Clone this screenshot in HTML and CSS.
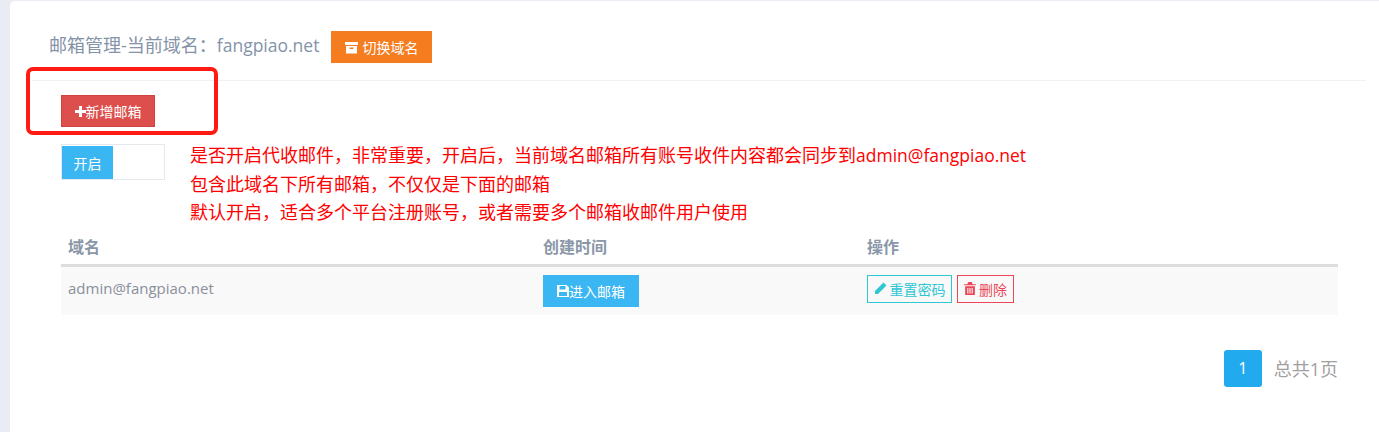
FILE: index.html
```html
<!doctype html>
<html>
<head>
<meta charset="utf-8">
<title>邮箱管理</title>
<link rel="stylesheet" href="styles.css">
</head>

<body>
<div class="card">
    <div class="head">
        <span class="head-title">邮箱管理-当前域名：<span class="latin">fangpiao.net</span></span>
        <a class="btn btn-orange">
            <svg width="13" height="13" viewBox="0 0 13 13"><path fill="#fff" d="M0 1h13v3H0zM1 5h11v7.500H1z"/><path fill="#f57d20" d="M4.500 6.500h4V8h-4z"/></svg>切换域名
        </a>
    </div>
    <div class="body">
        <a class="btn btn-red">
            <svg width="11" height="11" viewBox="0 0 11 11"><path fill="#fff" d="M4 0h3v4h4v3H7v4H4V7H0V4h4z"/></svg>新增邮箱
        </a>
        <div class="tip-row">
            <div class="switch"><span class="switch-on">开启</span></div>
            <div class="tip">
                <p>是否开启代收邮件，非常重要，开启后，当前域名邮箱所有账号收件内容都会同步到<span class="latin">admin@fangpiao.net</span></p>
                <p>包含此域名下所有邮箱，不仅仅是下面的邮箱</p>
                <p>默认开启，适合多个平台注册账号，或者需要多个邮箱收邮件用户使用</p>
            </div>
        </div>
        <table class="list">
            <thead>
                <tr><th class="col-a">域名</th><th class="col-b">创建时间</th><th>操作</th></tr>
            </thead>
            <tbody>
                <tr>
                    <td class="mail">admin@fangpiao.net</td>
                    <td>
                        <div class="cell-btns">
                            <a class="btn btn-blue">
                                <svg width="12" height="12" viewBox="0 0 12 12"><path fill="#fff" fill-rule="evenodd" d="M0 0h9.500L12 2.500V12H0zM2.500 1v3.500h6V1zM2 7v4h8V7z"/></svg>进入邮箱
                            </a>
                        </div>
                    </td>
                    <td>
                        <div class="cell-btns">
                            <a class="btn-line btn-cyan">
                                <svg width="13" height="13" viewBox="0 0 13 13"><path fill="#2ec7d4" d="M9.500 0.500l3 3L4 12H1v-3z"/></svg>重置密码
                            </a>
                            <a class="btn-line btn-pink">
                                <svg width="12" height="13" viewBox="0 0 11 12"><path fill="#ec4758" fill-rule="evenodd" d="M4 0h3l1 2h3v1H0V2h3zM1 4h9v8H1zM3 5.500v5h1v-5zM5 5.500v5h1v-5zM7 5.500v5h1v-5z"/></svg>删除
                            </a>
                        </div>
                    </td>
                </tr>
            </tbody>
        </table>
        <div class="pager">
            <span class="page-num">1</span>
            <span class="page-total">总共1页</span>
        </div>
    </div>
</div>
<div class="mark"></div>
</body>
</html>
```

FILE: styles.css
```css
html,body,div,p,table,th,td{margin:0;padding:0;}
html,body{height:100%;overflow:hidden;}
body{background:#e9ecf3;font-family:"Open Sans","Noto Sans CJK SC",sans-serif;color:#8a97a8;padding:1px 0 0 10px;box-sizing:border-box;}
a{text-decoration:none;display:inline-flex;align-items:center;justify-content:center;}
.latin{font-size:17.500px;}
.card{background:#fff;border-radius:5px 0 0 0;height:431px;padding:0 13px 0 22px;}
.head{display:flex;align-items:flex-start;height:80px;padding:30px 0 0 18px;box-sizing:border-box;border-bottom:1px solid #eff1f5;}
.head-title{font-size:18px;line-height:28px;color:#8493a8;margin-left:-1px;}
.btn{color:#fff;font-size:14px;height:32px;box-sizing:border-box;}
.btn-orange{background:#f57d20;width:101px;margin-left:12px;height:32px;}
.btn-orange svg{margin-right:4px;}
.btn-red{background:#dc4f4d;border:1px solid #cf4341;width:94px;}
.btn-blue{background:#3ab6f3;width:96px;}
.body{padding:14px 28px 0 29px;}
.tip-row{display:flex;margin-top:17px;}
.switch{width:104px;height:36px;box-sizing:border-box;border:1px solid #e5e8ec;padding:1px 0 0 0;}
.switch-on{display:flex;align-items:center;justify-content:center;width:51px;height:33px;background:#3ab6f3;color:#fff;font-size:14px;}
.tip{margin-left:25px;color:#f00;font-size:18px;line-height:28.500px;margin-top:-3px;}
.list{border-collapse:collapse;table-layout:fixed;width:1277px;margin-top:1.500px;}
.list th{text-align:left;font-size:16px;font-weight:bold;height:37px;padding:0 7px;box-sizing:border-box;border-bottom:3px solid #ddd;color:#8a97a8;}
.list th.col-a{width:475px;}
.list th.col-b{width:324px;}
.list td{background:#f9f9f9;height:48px;padding:0 7px;vertical-align:top;font-size:14px;}
.list td.mail{color:#8a8f9c;font-size:15px;line-height:43px;}
.cell-btns{display:flex;gap:5px;padding-top:8px;}
.btn-line{height:28px;box-sizing:border-box;font-size:14px;border:1px solid;}
.btn-line svg{margin-right:3px;}
.btn-cyan{color:#2ec7d4;border-color:#2ec7d4;width:85px;}
.btn-pink{color:#ec4758;border-color:#ec4758;width:57px;}
.pager{display:flex;justify-content:flex-end;align-items:center;margin-top:35px;}
.page-num{width:38px;height:37px;background:#22aaee;border-radius:3px;color:#fff;font-size:16px;display:flex;align-items:center;justify-content:center;}
.page-total{margin-left:12px;font-size:18px;color:#a0a0a0;}
.mark{position:absolute;left:26px;top:67px;width:192px;height:68px;box-sizing:border-box;border:4px solid #ff1a12;border-radius:7px;}
```
